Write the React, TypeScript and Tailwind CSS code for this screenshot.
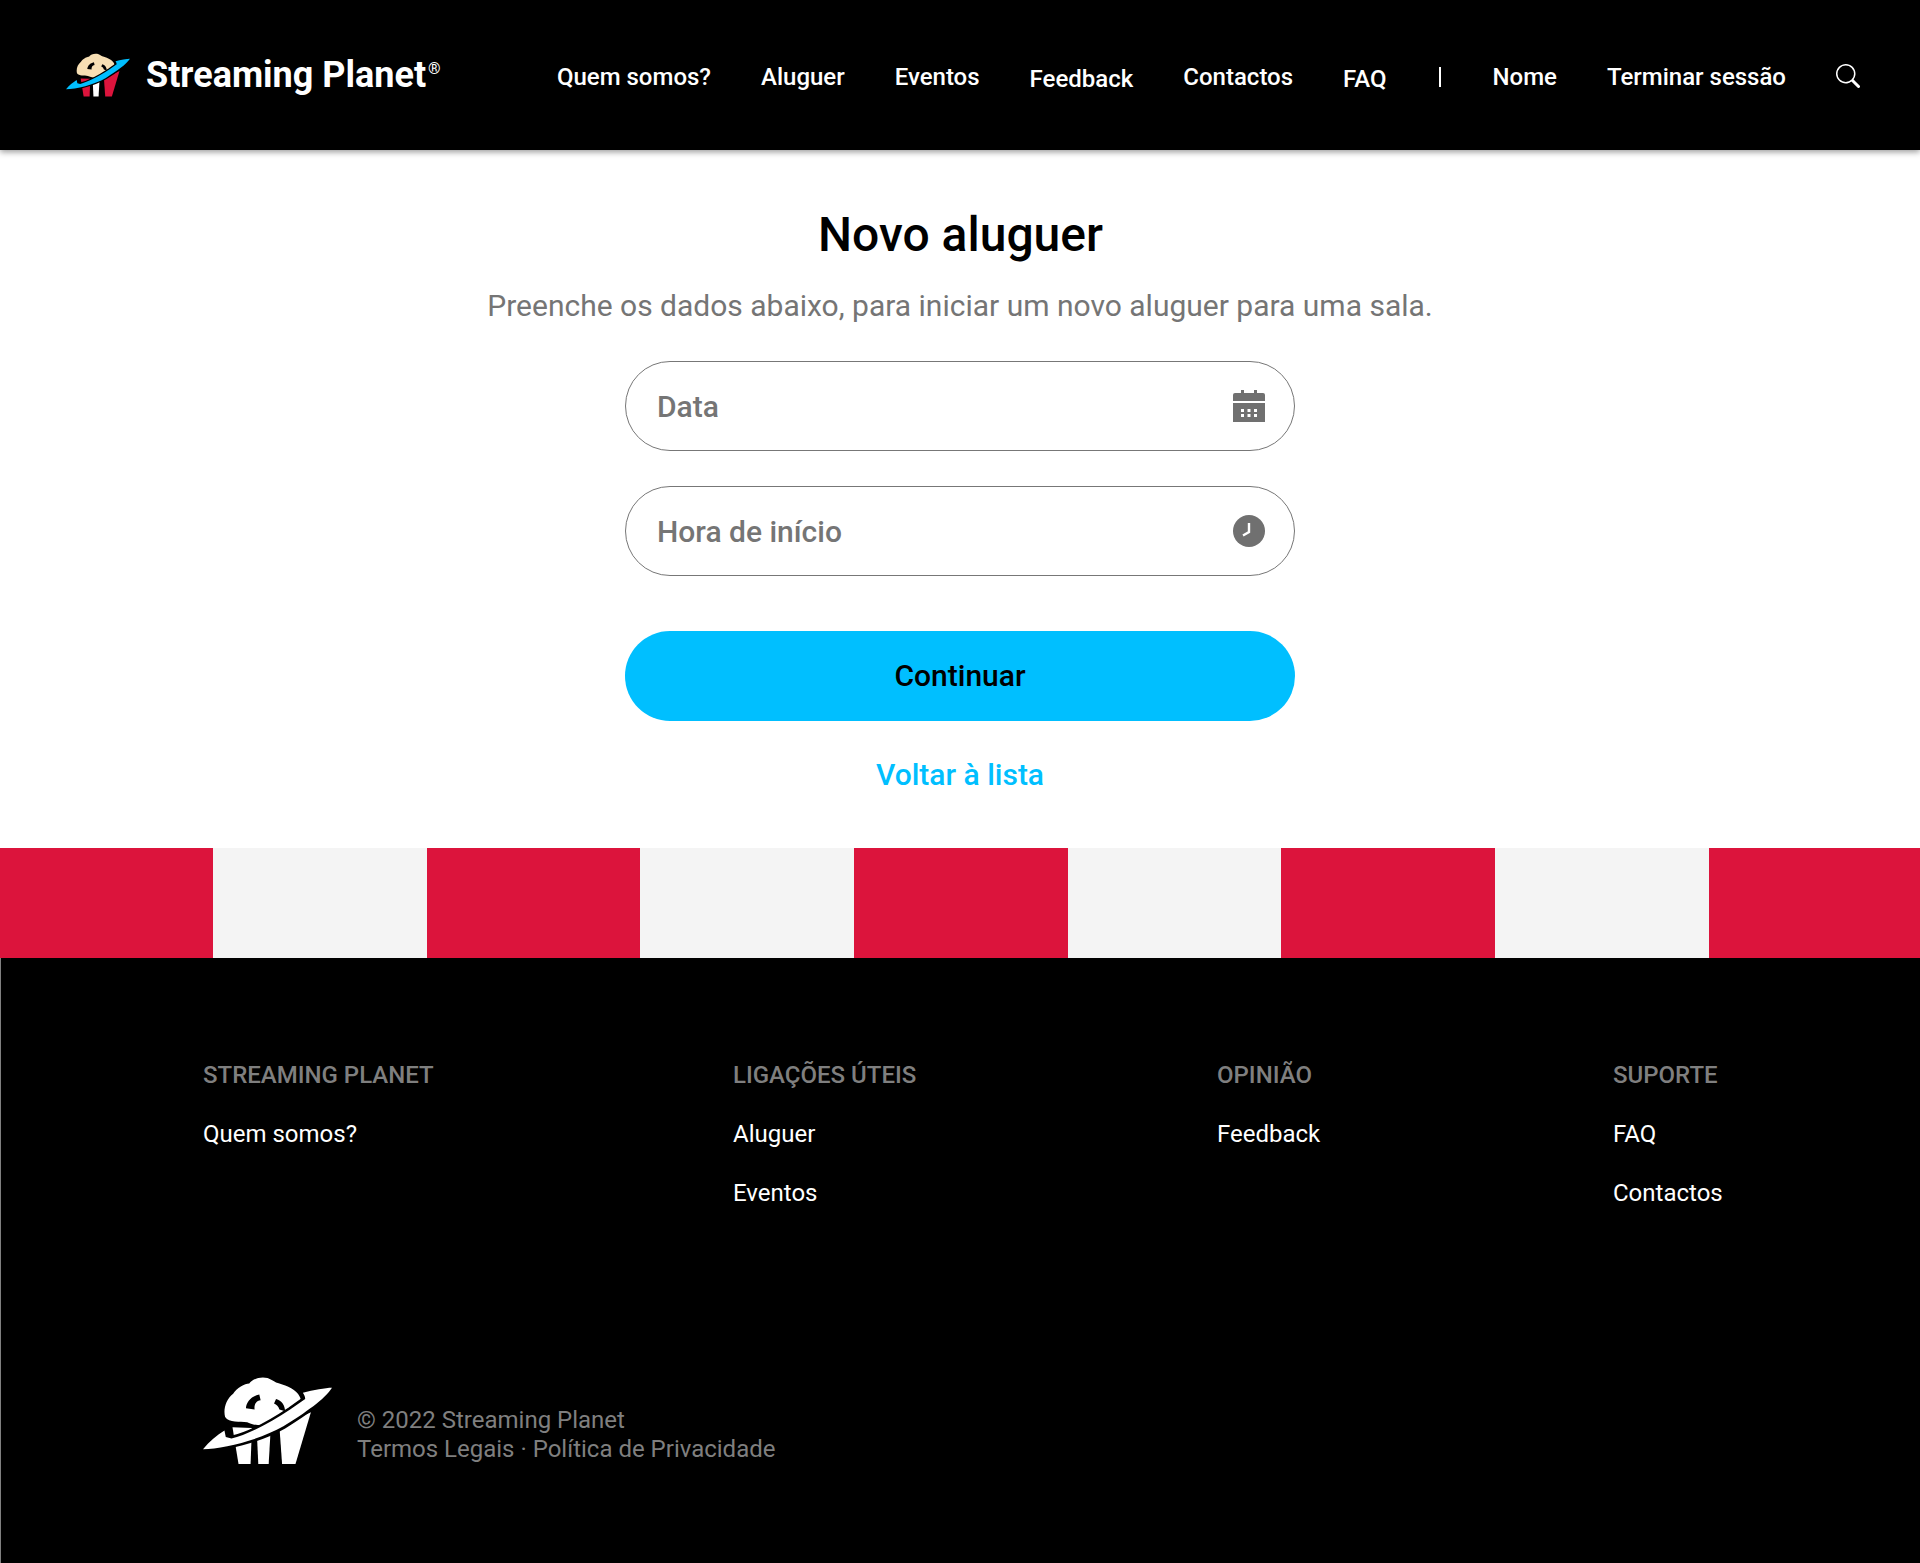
import { BsSearch } from "react-icons/bs";

const navLinks = [
  { label: "Quem somos?", low: false },
  { label: "Aluguer", low: false },
  { label: "Eventos", low: false },
  { label: "Feedback", low: true },
  { label: "Contactos", low: false },
  { label: "FAQ", low: true },
];

const footerColumns = [
  { title: "STREAMING PLANET", links: ["Quem somos?"] },
  { title: "LIGAÇÕES ÚTEIS", links: ["Aluguer", "Eventos"] },
  { title: "OPINIÃO", links: ["Feedback"] },
  { title: "SUPORTE", links: ["FAQ", "Contactos"] },
];

const stripes = [1, 2, 3, 4, 5, 6, 7, 8];

const Logo = ({
  className,
  cloud,
  ring,
  cup,
  mid,
}: {
  className: string;
  cloud: string;
  ring: string;
  cup: string;
  mid: string;
}) => (
  <svg viewBox="40 50 385 265" className={className}>
    <path d="M128 203 L186 205 L182 312 L146 312 Z" fill={cup} />
    <path d="M200 205 L243 190 L236 312 L205 312 Z" fill={mid} />
    <path d="M268 200 L362 158 L316 312 L276 312 Z" fill={cup} />
    <path
      d="M106 172 C100 150 108 120 130 103 C140 85 165 72 178 72 C190 55 225 48 245 62 C255 68 262 72 268 72 C290 78 320 92 328 110 C336 125 335 140 328 150 L300 175 L240 195 C210 200 185 195 172 188 C150 185 118 190 106 172 Z"
      fill={cloud}
    />
    <path
      d="M168 146 C170 125 185 110 208 105 L212 122 C198 124 192 135 194 150 Z M258 118 C275 122 285 138 285 155 L268 150 C265 140 260 135 252 132 Z"
      fill="#000"
    />
    <path
      d="M40 268 C58 245 82 226 104 212 L108 232 L125 236 C170 226 240 190 300 150 L345 118 C345 112 342 106 338 100 C370 92 405 85 425 85 C405 118 345 160 280 200 C210 240 100 268 40 268 Z"
      fill={ring}
      stroke="#000"
      strokeWidth="16"
      paintOrder="stroke"
    />
  </svg>
);

const CalendarIcon = () => (
  <svg viewBox="0 0 32 32" className="h-8 w-8" fill="#707070">
    <rect x="8" y="0" width="3" height="4" />
    <rect x="21" y="0" width="3" height="4" />
    <path d="M0 11 V5 Q0 3 2 3 H30 Q32 3 32 5 V11 Z" />
    <path d="M0 13 H32 V32 H0 Z M8 19 V22 H11 V19 Z M14.5 19 V22 H17.5 V19 Z M21 19 V22 H24 V19 Z M8 24 V27 H11 V24 Z M14.5 24 V27 H17.5 V24 Z M21 24 V27 H24 V24 Z" fillRule="evenodd" />
  </svg>
);

const ClockIcon = () => (
  <svg viewBox="0 0 32 32" className="h-8 w-8">
    <circle cx="16" cy="16" r="16" fill="#707070" />
    <path d="M16 8 V17 L10 20.5" fill="none" stroke="#fff" strokeWidth="2.4" />
  </svg>
);

const Field = ({ label, children }: { label: string; children: React.ReactNode }) => (
  <div className="flex h-[90px] w-[670px] items-center justify-between rounded-full border border-[#777777] pl-[31px] pr-[29px]">
    <span className="text-[30px] font-medium text-[#757575]">{label}</span>
    {children}
  </div>
);

const App = () => {
  return (
    <div className="flex min-h-[1563px] flex-col bg-white font-['Roboto',sans-serif]">
      <header className="flex h-[150px] items-center justify-between bg-black pl-[66px] pr-[60px] shadow-[0_2px_6px_rgba(0,0,0,0.4)]">
        <div className="flex items-center gap-4">
          <Logo className="h-11 w-16" cloud="#f7dfb4" ring="#00bfff" cup="#dc143c" mid="#ffffff" />
          <span className="flex items-start text-[36px] font-bold leading-none text-white">
            Streaming Planet
            <span className="ml-0.5 mt-1 text-[16px] font-normal leading-none">®</span>
          </span>
        </div>
        <nav className="mt-[3px] flex items-center gap-[50px] text-[24px] font-medium text-white">
          {navLinks.map((link) => (
            <a key={link.label} className={link.low ? "mt-1" : ""}>
              {link.label}
            </a>
          ))}
          <span className="ml-[2px] mr-[2px] h-5 w-0.5 bg-white" />
          <a>Nome</a>
          <a>Terminar sessão</a>
          <BsSearch className="-mt-[2px] h-6 w-6" />
        </nav>
      </header>

      <main className="flex h-[698px] flex-col items-center pt-[51px]">
        <h1 className="ml-px text-[48px] font-medium leading-[68px] text-black">Novo aluguer</h1>
        <p className="mt-[15px] text-[30px] leading-[44px] text-[#757575]">
          Preenche os dados abaixo, para iniciar um novo aluguer para uma sala.
        </p>
        <div className="mt-[33px] flex flex-col gap-[35px]">
          <Field label="Data">
            <CalendarIcon />
          </Field>
          <Field label="Hora de início">
            <ClockIcon />
          </Field>
        </div>
        <button className="mt-[55px] h-[90px] w-[670px] rounded-full bg-[#00bfff] pb-[2px] text-[30px] font-medium text-black">
          Continuar
        </button>
        <a className="mt-[36px] text-[30px] font-medium leading-[36px] text-[#00bfff]">Voltar à lista</a>
      </main>

      <div className="flex h-[110px] overflow-hidden">
        <div className="w-[213px] shrink-0 bg-[#dc143c]" />
        {stripes.map((i) => (
          <div
            key={i}
            className={i % 2 === 0 ? "w-[213.7px] shrink-0 bg-[#dc143c]" : "w-[213.7px] shrink-0 bg-[#f4f4f4]"}
          />
        ))}
      </div>

      <footer className="flex h-[605px] flex-col border-l border-[#808080] bg-black pl-[202px] pr-[197px] pt-[104px]">
        <div className="grid grid-cols-[530px_484px_396px_auto]">
          {footerColumns.map((col) => (
            <div key={col.title} className="flex flex-col gap-[33px] text-[24px] leading-[26px]">
              <span className="font-medium text-[#7f7f7f]">{col.title}</span>
              {col.links.map((l) => (
                <a key={l} className="text-white">
                  {l}
                </a>
              ))}
            </div>
          ))}
        </div>
        <div className="mt-[170px] flex items-center gap-[25px]">
          <Logo className="h-[89px] w-[129px]" cloud="#fff" ring="#fff" cup="#fff" mid="#fff" />
          <div className="mt-[29px] text-[24px] leading-[29px] text-[#7f7f7f]">
            <div>© 2022 Streaming Planet</div>
            <div>Termos Legais · Política de Privacidade</div>
          </div>
        </div>
      </footer>
    </div>
  );
};

export default App;
